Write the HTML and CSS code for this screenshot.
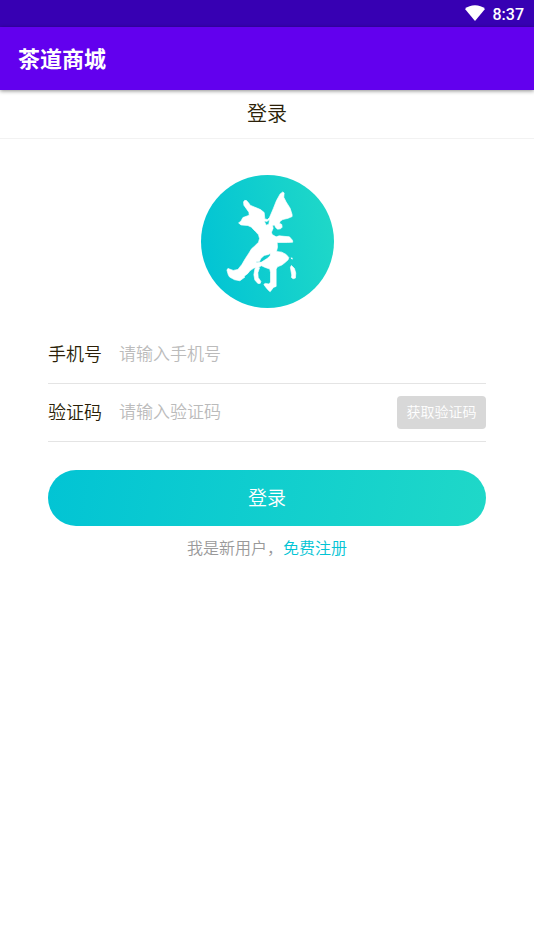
FILE: index.html
```html
<!DOCTYPE html>
<html lang="zh-CN">
<head>
<meta charset="utf-8">
<meta name="viewport" content="width=device-width, initial-scale=1">
<title>茶道商城</title>
<link rel="stylesheet" href="styles.css">
</head>
<body>
<div class="status-bar">
  <svg class="wifi" viewBox="0 0 20 16" aria-hidden="true"><path d="M0 4C5-.9 15-.9 20 4L10 16Z"/></svg>
  <time>8:37</time>
</div>
<header class="app-bar"><h1>茶道商城</h1></header>
<div class="page-title"><h2>登录</h2></div>
<main class="content">
  <svg class="logo" viewBox="31 30 400 400" aria-hidden="true">
    <defs>
      <linearGradient id="sea" x1="0" y1="0.6" x2="1" y2="0.4">
        <stop offset="0" stop-color="#02c4d4"/>
        <stop offset="1" stop-color="#1fd8c8"/>
      </linearGradient>
    </defs>
    <circle cx="231" cy="230" r="200" fill="url(#sea)"/>
    <g fill="#fff" stroke="#fff" stroke-width="2" stroke-linejoin="round">
      <path fill-rule="evenodd" d="M159 111Q161 104 168 107L175 115L179 121L210 134L221 143L223 162L231 164L237 158L248 132L258 107L269 87L277 81L281 84L280 97L287 111L299 130L305 149L305 155L293 160L277 164L269 169L267 175L274 179L275 187L270 192L261 193L255 187L252 180L246 182L248 190L243 202L245 209L257 216L266 213L297 216L306 226L307 232L291 233L260 233L261 247L258 260L274 262L287 269L295 278L293 285L283 294L274 301L261 306L257 313L257 365L249 368L239 381L232 375L224 365L220 359L224 356L236 358L240 352L240 323L238 313L224 308L213 303L202 308L190 310L178 318L172 326L160 335L163 337L148 348L132 345L117 337L113 330L109 316L112 311L128 317L142 314L154 299L164 282L175 265L183 252L191 245L204 232L207 221L204 210L196 201L188 193L183 187L172 182L151 180L144 174L151 169L157 158L176 151L175 142L168 132L160 121ZM221 168L227 181L235 178L237 164L229 170ZM239 265L234 269L221 272L211 281L207 290L197 291L198 294L213 292L230 281L239 273Z"/>
      <path d="M198 306L193 313L190 330L193 346L202 356L209 356L211 350L203 338L202 324L207 309Z"/>
      <path d="M303 302Q298 306 301 315L304 331L303 338L308 342L315 340L316 325L312 311Z"/>
      <path stroke="none" d="M301 278L306 279L307 284L302 283Z"/>
    </g>
  </svg>
  <form class="login-form">
    <div class="field">
      <label for="phone">手机号</label>
      <input id="phone" type="tel" placeholder="请输入手机号">
    </div>
    <div class="field">
      <label for="code">验证码</label>
      <input id="code" type="text" inputmode="numeric" placeholder="请输入验证码">
      <button class="get-code" type="button">获取验证码</button>
    </div>
    <button class="submit" type="submit">登录</button>
  </form>
  <p class="register">我是新用户，<a href="#register">免费注册</a></p>
</main>
</body>
</html>
```
FILE: styles.css
```css
* {
  box-sizing: border-box;
}

body {
  margin: 0;
  background: #fff;
  color: #2b1f08;
  font-family: "Noto Sans CJK SC", sans-serif;
  font-weight: 350;
}

h1,
h2,
p {
  margin: 0;
}

input,
button {
  font: inherit;
  border: 0;
  padding: 0;
}

.status-bar {
  display: flex;
  align-items: flex-start;
  justify-content: flex-end;
  gap: 8px;
  height: 27px;
  padding: 5px 10px 0;
  background: #3700b3;
  color: #fff;
  font: 500 16px/20px Roboto, sans-serif;
}

.wifi {
  width: 20px;
  height: 16px;
  fill: #fff;
}

.app-bar {
  position: relative;
  display: flex;
  align-items: center;
  height: 63px;
  padding: 0 18px 4px;
  background: #6200ee;
  color: #fff;
  box-shadow: 0 1px 4px rgba(0, 0, 0, 0.45);
}

.app-bar h1 {
  font-size: 22px;
  line-height: 32px;
  font-weight: 700;
}

.page-title {
  display: flex;
  justify-content: center;
  padding: 8px 0 10px;
  border-bottom: 1px solid #f2f2f2;
}

.page-title h2 {
  font-size: 20px;
  line-height: 30px;
  font-weight: inherit;
}

.content {
  padding: 36px 48px;
}

.logo {
  display: block;
  width: 133px;
  height: 133px;
  margin: 0 auto 18px;
}

.field {
  display: flex;
  align-items: center;
  height: 58px;
  border-bottom: 1px solid #e4e4e4;
}

.field label {
  flex: none;
  width: 71px;
  padding-bottom: 4px;
  font-size: 18px;
}

.field input {
  flex: 1;
  min-width: 0;
  padding-bottom: 4px;
  background: none;
  color: inherit;
  font-size: 17px;
  line-height: 28px;
  outline: 0;
}

.field input::placeholder {
  color: #bbb;
  opacity: 1;
}

.get-code {
  flex: none;
  padding: 0 8px 4px;
  height: 33px;
  min-width: 89px;
  border-radius: 4px;
  background: #d8d8d8;
  color: #fff;
  font-size: 14px;
}

.submit {
  display: block;
  width: 100%;
  height: 56px;
  margin-top: 28px;
  padding-bottom: 4px;
  border-radius: 28px;
  background: linear-gradient(100deg, #02c4d4, #1fd8c8);
  color: #fff;
  font-size: 19px;
}

.register {
  margin-top: 9px;
  color: #999;
  font-size: 16px;
  line-height: 24px;
  text-align: center;
}

.register a {
  color: #02c4d4;
  text-decoration: none;
}
```
